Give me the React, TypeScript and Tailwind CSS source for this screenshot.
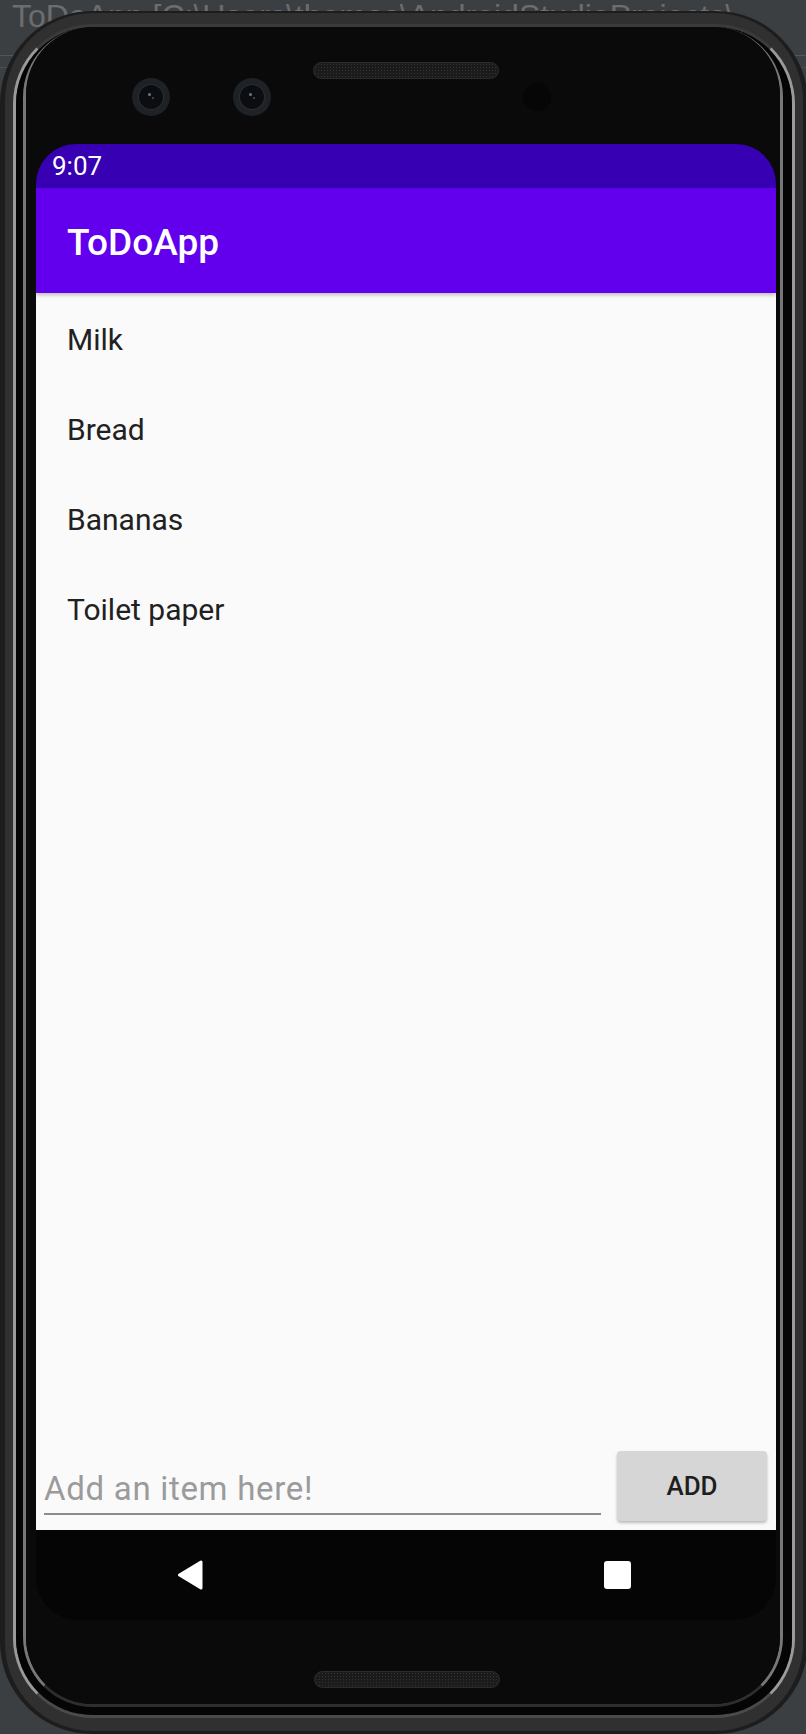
import React from 'react';

const items = ['Milk', 'Bread', 'Bananas', 'Toilet paper'];

const Camera: React.FC<{ className?: string }> = ({ className = '' }) => (
    <div
        className={`flex h-[38px] w-[38px] items-center justify-center rounded-full bg-[#1e2226] ${className}`}
    >
        <div className="relative h-[24px] w-[24px] rounded-full bg-[#0b0d10] ring-1 ring-[#2a2e33]">
            <div className="absolute left-[9px] top-[8px] h-[3px] w-[3px] rounded-full bg-[#6d7690]" />
            <div className="absolute left-[13px] top-[12px] h-[2px] w-[2px] rounded-full bg-[#4a5268]" />
        </div>
    </div>
);

const Grille: React.FC<{ className?: string }> = ({ className = '' }) => (
    <div
        className={`h-[17px] w-[186px] rounded-full border border-[#2c2c2c] bg-[#1b1b1b] bg-[radial-gradient(#333_1px,transparent_1px)] bg-[length:3px_3px] ${className}`}
    />
);

export default function App() {
    return (
        <div className="relative h-[1734px] w-[806px] overflow-hidden bg-[#3c3f41]">
            {/* IDE window behind the emulator */}
            <div className="absolute left-[12px] top-0 whitespace-nowrap font-['Liberation_Sans',sans-serif] text-[32px] leading-[32px] text-[#6b6e71]">
                ToDoApp [C:\Users\thomas\AndroidStudioProjects\
            </div>
            <div className="absolute left-0 top-[55px] h-px w-full bg-[#515557]" />
            <div className="absolute left-0 top-[67px] h-px w-full bg-[#4b4f51]" />

            {/* Phone frame */}
            <div className="relative z-10 mt-[11px] flex h-[1723px] w-[808px] flex-col rounded-[92px] bg-[#1d1d1d] px-[5px] pb-[3px] pt-[2px]">
                <div className="flex flex-1 flex-col rounded-[88px] bg-[#303030] px-[8px] pb-[13px] pt-[11px]">
                    <div className="flex flex-1 flex-col rounded-[80px] border-[3px] border-[#9a9a9a] border-b-[#4a4a4a] border-t-[#3b3b3b]">
                        <div className="flex flex-1 flex-col rounded-[77px] bg-[#050505] pb-[8px] pl-[7px] pr-[9px]">
                            <div className="flex flex-1 flex-col rounded-[70px] border-x-[3px] border-b-[3px] border-[#777777] border-b-[#2e2e2e]">
                                <div className="flex flex-1 flex-col rounded-[67px] bg-[#0a0a0a] pl-[10px] pr-[4px]">
                                    {/* Top bezel */}
                                    <div className="flex h-[117px] items-start">
                                        <Camera className="ml-[96px] mt-[51px]" />
                                        <Camera className="ml-[63px] mt-[51px]" />
                                        <Grille className="ml-[42px] mt-[35px]" />
                                        <div className="ml-[24px] mt-[56px] h-[28px] w-[28px] rounded-full bg-[#060606]" />
                                    </div>

                                    {/* Screen */}
                                    <div className="flex h-[1476px] flex-col overflow-hidden rounded-b-[42px] rounded-t-[40px] font-[Roboto,sans-serif]">
                                        <div className="flex h-[44px] items-center bg-[#3700b3] pl-[16px] text-[26px] leading-none text-white">
                                            9:07
                                        </div>
                                        <div className="relative z-10 flex h-[105px] items-center bg-[#6200ee] pl-[31px] pt-[4px] text-[37px] font-medium leading-none text-white shadow-[0_2px_4px_rgba(0,0,0,0.25)]">
                                            ToDoApp
                                        </div>

                                        <div className="flex flex-1 flex-col bg-[#fafafa]">
                                            <ul>
                                                {items.map((item) => (
                                                    <li
                                                        key={item}
                                                        className="flex h-[90px] items-center pl-[31px] pt-[3px] text-[30px] leading-none text-[#212121]"
                                                    >
                                                        {item}
                                                    </li>
                                                ))}
                                            </ul>

                                            <div className="mt-auto flex items-end">
                                                <div className="mb-[15px] ml-[8px] w-[557px] border-b-2 border-[#8b8b8b] pb-[8px] text-[33px] leading-none tracking-[0.7px] text-[#9b9b9b]">
                                                    Add an item here!
                                                </div>
                                                <button className="mb-[9px] ml-[16px] mr-[9px] flex h-[70px] w-[150px] items-center justify-center rounded-[4px] bg-[#d6d6d6] text-[26px] font-medium leading-none text-[#1e1e1e] shadow-[0_2px_3px_rgba(0,0,0,0.25)]">
                                                    ADD
                                                </button>
                                            </div>
                                        </div>

                                        {/* Navigation bar */}
                                        <div className="flex h-[90px] items-center bg-[#050505]">
                                            <svg className="ml-[141px]" width="26" height="30" viewBox="0 0 26 30">
                                                <path
                                                    d="M24 2 L24 28 L2.5 15 Z"
                                                    fill="white"
                                                    stroke="white"
                                                    strokeWidth="3"
                                                    strokeLinejoin="round"
                                                />
                                            </svg>
                                            <div className="ml-[401px] h-[28px] w-[27px] rounded-[3px] bg-white" />
                                        </div>
                                    </div>

                                    {/* Bottom bezel */}
                                    <div className="flex h-[84px] items-start">
                                        <Grille className="ml-[278px] mt-[51px]" />
                                    </div>
                                </div>
                            </div>
                        </div>
                    </div>
                </div>
            </div>
        </div>
    );
}
